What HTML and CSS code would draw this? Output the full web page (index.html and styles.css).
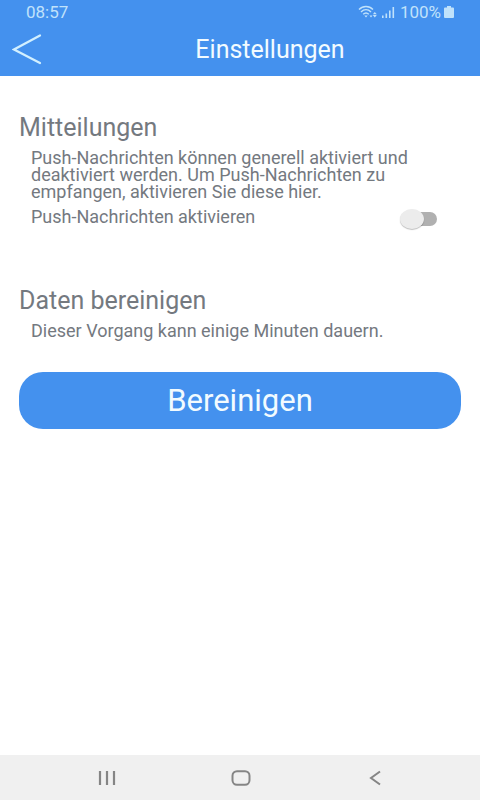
FILE: index.html
```html
<!DOCTYPE html>
<html lang="de">
<head>
    <meta charset="UTF-8">
    <meta name="viewport" content="width=device-width, initial-scale=1.0">
    <title>Einstellungen</title>
    <link rel="stylesheet" href="styles.css">
</head>
<body>
    <header>
        <div class="status-bar">
            <span>08:57</span>
            <div class="status-icons">
                <svg class="wifi" width="20" height="14" viewBox="0 0 20 14" fill="none" stroke="currentColor" stroke-width="1.4">
                    <path d="M1 4.500C5 0.500 11 0.500 15 4.500M3 7C6 4 10 4 13 7M5.200 9.300C7 7.500 9 7.500 10.800 9.300"/>
                    <path d="M6.300 10.500h3.400L8 12.500z" fill="currentColor" stroke="none"/>
                    <path d="M11.500 10.500h3L13 12.500zM14.800 9.300h4L16.800 7zM14.800 10h4L16.800 12.500z" fill="currentColor" stroke="none"/>
                </svg>
                <svg width="14" height="14" viewBox="0 0 14 14" fill="currentColor">
                    <path d="M1 10.500h1.600V13H1zM4.500 8.500h1.600V13H4.500zM8 5.500h1.600V13H8zM11.500 2h1.600v11h-1.600z"/>
                </svg>
                <span class="battery-text">100%</span>
                <svg width="10" height="14" viewBox="0 0 10 14" fill="currentColor">
                    <path d="M3 1h4v1.500h2q1 0 1 1V12q0 1-1 1H1q-1 0-1-1V3.500q0-1 1-1h2z"/>
                </svg>
            </div>
        </div>
        <div class="title-bar">
            <button type="button" class="back" aria-label="Zurück">
                <svg width="30" height="32" viewBox="0 0 30 32" fill="none" stroke="currentColor" stroke-width="2.200" stroke-linecap="round">
                    <path d="M28 1.500L2 15.500L28 29"/>
                </svg>
            </button>
            <h1>Einstellungen</h1>
        </div>
    </header>

    <main>
        <section class="notifications">
            <h2>Mitteilungen</h2>
            <p>Push-Nachrichten können generell aktiviert und deaktiviert werden. Um Push-Nachrichten zu empfangen, aktivieren Sie diese hier.</p>
            <div class="switch-row">
                <label for="push">Push-Nachrichten aktivieren</label>
                <input type="checkbox" id="push" class="switch">
            </div>
        </section>
        <section>
            <h2>Daten bereinigen</h2>
            <p>Dieser Vorgang kann einige Minuten dauern.</p>
        </section>
        <button type="button" class="clean">Bereinigen</button>
    </main>

    <nav>
        <button type="button" aria-label="Letzte Apps">
            <svg width="20" height="18" viewBox="0 0 20 18" fill="none" stroke="currentColor" stroke-width="2.200">
                <path d="M3 2v14M10 2v14M17 2v14"/>
            </svg>
        </button>
        <button type="button" aria-label="Startseite">
            <svg width="20" height="18" viewBox="0 0 20 18" fill="none" stroke="currentColor" stroke-width="2">
                <rect x="1.500" y="2.200" width="17" height="13.600" rx="4.500"/>
            </svg>
        </button>
        <button type="button" aria-label="Zurück">
            <svg width="20" height="18" viewBox="0 0 20 18" fill="none" stroke="currentColor" stroke-width="2">
                <path d="M15 2.500L6 9l9 6.500"/>
            </svg>
        </button>
    </nav>
</body>
</html>
```
FILE: styles.css
```css
* {
    box-sizing: border-box;
}
body {
    font-family: Roboto, sans-serif;
    margin: 0;
    min-height: 100vh;
    display: flex;
    flex-direction: column;
    background-color: #fff;
    color: #74797f;
}
button {
    font-family: inherit;
    border: none;
    padding: 0;
    cursor: pointer;
}
svg {
    display: block;
}
header {
    background-color: #4491ee;
    color: #f2fbff;
}
.status-bar {
    display: flex;
    justify-content: space-between;
    align-items: center;
    height: 24px;
    padding: 0 26px;
    font-size: 17px;
    color: #c0e2fb;
}
.status-icons {
    display: flex;
    align-items: center;
    gap: 3px;
}
.battery-text {
    margin-left: 2px;
}
.title-bar {
    display: flex;
    align-items: center;
    height: 52px;
}
.back {
    width: 60px;
    padding-left: 12px;
    background: none;
    color: #d2f0ff;
}
h1 {
    flex: 1;
    margin: 0;
    font-size: 25px;
    font-weight: 400;
    line-height: 28px;
    text-align: center;
}
main {
    flex: 1;
    padding: 38px 19px;
}
h2 {
    margin: 0;
    font-size: 25px;
    font-weight: 400;
    line-height: 28px;
}
p {
    margin: 7px 0 0;
    padding: 0 12px;
    font-size: 18px;
    line-height: 17px;
}
.notifications {
    margin-bottom: 57px;
}
.switch-row {
    display: flex;
    justify-content: space-between;
    align-items: flex-start;
    margin-top: 8px;
    padding: 0 24px 0 12px;
    font-size: 18px;
    line-height: 18px;
}
.switch {
    appearance: none;
    position: relative;
    width: 37px;
    height: 22px;
    margin: 0;
    cursor: pointer;
}
.switch::before {
    content: "";
    position: absolute;
    inset: 4px 0 4px 6px;
    border-radius: 7px;
    background-color: #b0b0b0;
}
.switch::after {
    content: "";
    position: absolute;
    top: 1px;
    left: 0;
    width: 24px;
    height: 20px;
    border-radius: 50%;
    background-color: #ececec;
    box-shadow: 0 1px 1px rgba(0, 0, 0, 0.25);
}
.switch:checked::before {
    background-color: #a3c8f6;
}
.switch:checked::after {
    left: 13px;
    background-color: #4491ee;
}
.clean {
    display: block;
    width: 100%;
    height: 57px;
    margin-top: 33px;
    border-radius: 24px;
    background-color: #4491ee;
    color: #f2fbff;
    font-size: 31px;
}
nav {
    display: flex;
    justify-content: space-between;
    align-items: center;
    height: 45px;
    padding: 0 95px 0 97px;
    background-color: #f0f0f0;
}
nav button {
    background: none;
    color: #858585;
}
```
